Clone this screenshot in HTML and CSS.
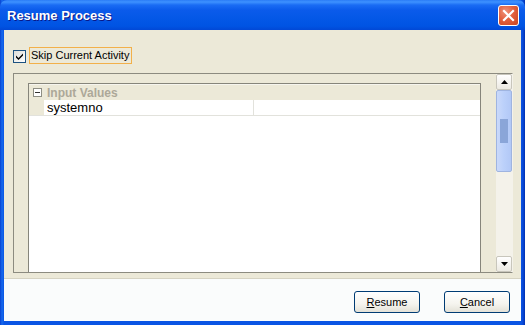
FILE: index.html
```html
<!DOCTYPE html>
<html>
<head>
<meta charset="utf-8">
<link rel="stylesheet" href="styles.css">
</head>
<body>
<div class="window">
  <div class="titlebar">
    <span class="title">Resume Process</span>
    <button class="close" aria-label="Close">
      <svg width="13" height="13" viewBox="0 0 13 13"><path d="M2 2 L11 11 M11 2 L2 11" stroke="#fff" stroke-width="2.2" stroke-linecap="square"/></svg>
    </button>
  </div>
  <div class="client">
    <div class="content">
      <label class="check-row">
        <span class="checkbox">
          <svg width="11" height="11" viewBox="0 0 11 11"><path d="M2 4.5 L4.5 7 L9 2.5 L9 4.5 L4.5 9 L2 6.5 Z" fill="#000"/></svg>
        </span>
        <span class="check-label">Skip Current Activity</span>
      </label>
      <div class="scrollpane">
        <div class="viewport">
          <div class="propsheet">
            <div class="group-row">
              <span class="toggle"><span class="minus"></span></span>
              <span class="group-title">Input Values</span>
            </div>
            <div class="prop-row">
              <span class="gutter"></span>
              <span class="prop-name">systemno</span>
              <span class="prop-value"></span>
            </div>
          </div>
        </div>
        <div class="scrollbar">
          <div class="sb-btn"><svg width="7" height="4" viewBox="0 0 7 4"><path d="M0 4 L3.5 0 L7 4 Z" fill="#000"/></svg></div>
          <div class="sb-track">
            <div class="sb-thumb"><div class="grip"></div></div>
          </div>
          <div class="sb-btn"><svg width="7" height="4" viewBox="0 0 7 4"><path d="M0 0 L3.5 4 L7 0 Z" fill="#000"/></svg></div>
        </div>
      </div>
    </div>
    <div class="footer">
      <button class="btn"><u>R</u>esume</button>
      <button class="btn"><u>C</u>ancel</button>
    </div>
  </div>
</div>
</body>
</html>
```

FILE: styles.css
```css
* { box-sizing: border-box; }
html, body { margin: 0; padding: 0; }
body {
  width: 525px;
  height: 325px;
  overflow: hidden;
  font-family: "Liberation Sans", Arial, sans-serif;
  font-size: 11px;
}
.window {
  width: 525px;
  height: 325px;
  display: flex;
  flex-direction: column;
  background: linear-gradient(to right, #0840D0 0px, #166AEE 2px, #0A55E4 4px, #0A55E4 521px, #0847D6 523px, #0030B0 525px);
}
.titlebar {
  height: 30px;
  flex: none;
  display: flex;
  align-items: center;
  padding: 0 6px 0 7px;
  background: linear-gradient(#2B7CF6 0px, #3E92FF 2px, #1A6CF4 5px, #0B5BEB 10px, #0357E6 20px, #0054E3 26px, #0148D6 30px);
  border-radius: 7px 7px 0 0;
}
.title {
  flex: 1;
  color: #fff;
  font-family: "Liberation Sans", Arial, sans-serif;
  font-weight: bold;
  font-size: 13px;
  text-shadow: 1px 1px 0 #0A1888;
  margin-top: 1px;
}
.close {
  width: 21px;
  height: 21px;
  padding: 0;
  border: 1px solid #fff;
  border-radius: 3px;
  background: radial-gradient(circle at 35% 30%, #F0937A 0%, #E2603E 45%, #C9441F 100%);
  display: flex;
  align-items: center;
  justify-content: center;
}
.client {
  flex: 1;
  display: flex;
  flex-direction: column;
  margin: 0 4px 4px 4px;
  background: #ECE9D8;
}
.content {
  flex: 1;
  padding: 17px 8px 5px 9px;
  display: flex;
  flex-direction: column;
}
.check-row {
  height: 17px;
  display: flex;
  align-items: center;
  margin-bottom: 9px;
}
.checkbox {
  width: 13px;
  height: 13px;
  border: 1px solid #1C5180;
  background: linear-gradient(135deg, #DCDCD7, #FFFFFF);
  display: flex;
  align-items: center;
  justify-content: center;
  margin-right: 3px;
  margin-top: 1px;
}
.check-label {
  height: 17px;
  line-height: 15px;
  padding: 0 2px 0 1px;
  border: 1px solid #F2B04A;
  color: #000;
}
.scrollpane {
  height: 200px;
  display: flex;
  border-top: 1px solid #8C8B80;
  border-left: 1px solid #8C8B80;
  border-right: 1px solid #F4F2EA;
  border-bottom: 1px solid #8C8B80;
  overflow: hidden;
}
.viewport {
  flex: 1;
  padding: 9px 15px 0 14px;
  display: flex;
  overflow: hidden;
}
.propsheet {
  flex: 1;
  border: 1px solid #86857B;
  border-bottom: none;
  background: #fff;
  display: flex;
  flex-direction: column;
}
.group-row {
  height: 16px;
  display: flex;
  align-items: center;
  background: #ECE9D8;
  border-top: 1px solid #F6F5EE;
}
.toggle {
  width: 9px;
  height: 9px;
  border: 1px solid #8E8E84;
  background: #fff;
  margin-left: 4px;
  margin-right: 5px;
  display: flex;
  align-items: center;
  justify-content: center;
}
.minus {
  width: 5px;
  height: 1px;
  background: #333;
}
.group-title {
  font-weight: bold;
  color: #ACA899;
  font-size: 12px;
}
.prop-row {
  height: 16px;
  display: flex;
  border-bottom: 1px solid #E2E2DC;
}
.gutter {
  width: 15px;
  background: #ECE9D8;
}
.prop-name {
  width: 210px;
  border-right: 1px solid #E2E2DC;
  font-size: 13px;
  line-height: 15px;
  padding-left: 3px;
  color: #000;
}
.prop-value {
  flex: 1;
}
.scrollbar {
  width: 16px;
  display: flex;
  flex-direction: column;
  background: #F6F4EC;
}
.sb-btn {
  height: 16px;
  flex: none;
  border: 1px solid #C8C6BC;
  border-radius: 2px;
  background: linear-gradient(#FFFFFF, #ECEAE2);
  display: flex;
  align-items: center;
  justify-content: center;
}
.sb-track {
  flex: 1;
  padding: 0;
  background: #F4F2EA;
}
.sb-thumb {
  height: 82px;
  border: 1px solid #9FB4E0;
  border-radius: 2px;
  background: linear-gradient(to right, #CAD9FA, #BBD0FA 50%, #B2C8F6);
  display: flex;
  align-items: center;
  justify-content: center;
}
.grip {
  width: 8px;
  height: 24px;
  background-image: radial-gradient(circle, #8AA5D8 0.9px, transparent 1px);
  background-size: 2px 2px;
}
.footer {
  height: 43px;
  flex: none;
  border-top: 1px solid #D6D3C2;
  background: #FAFCFC;
  display: flex;
  justify-content: flex-end;
  gap: 24px;
  padding: 12px 11px 0 0;
}
.btn {
  width: 66px;
  height: 22px;
  border: 1px solid #003C74;
  border-radius: 3px;
  background: linear-gradient(#FFFFFF 0%, #F5F4EE 60%, #E3E1D7 100%);
  font-family: "Liberation Sans", Arial, sans-serif;
  font-size: 11px;
  color: #000;
  padding: 0;
}
```
